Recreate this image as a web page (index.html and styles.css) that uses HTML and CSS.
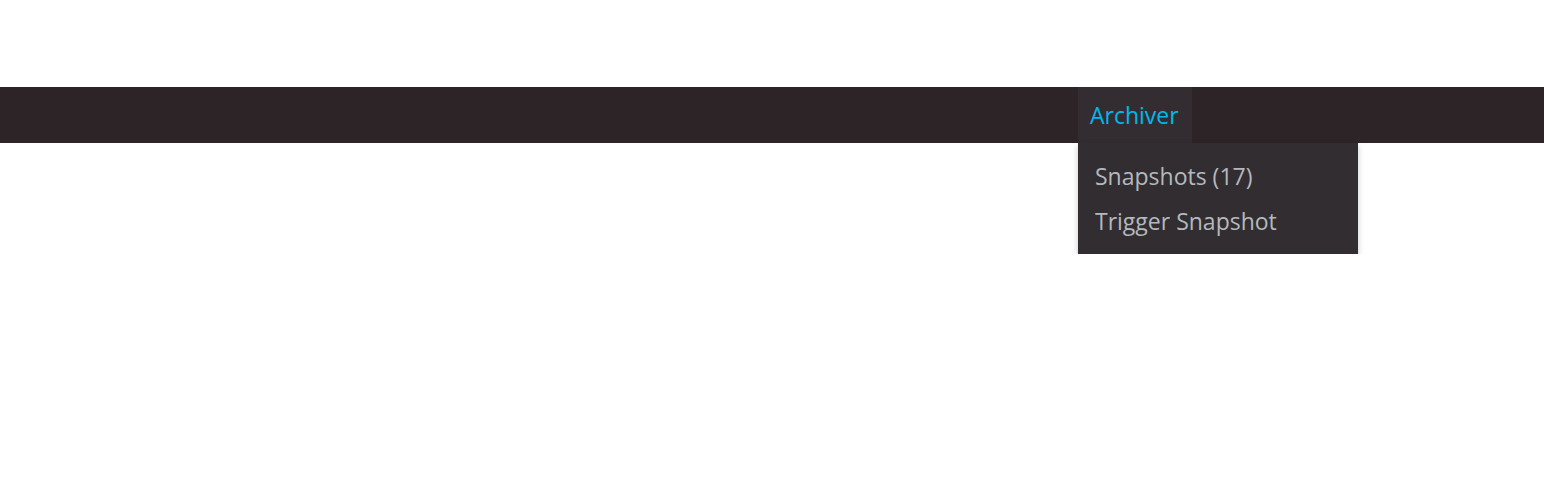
FILE: index.html
```html
<!DOCTYPE html>
<html>
<head>
<meta charset="utf-8">
<link rel="stylesheet" href="styles.css">
</head>
<body>
<div class="page">
  <div class="adminbar">
    <div class="menu-item">
      <a class="menu-link" href="#">Archiver</a>
    </div>
  </div>
  <div class="drop-row">
    <div class="dropdown">
      <a class="drop-link" href="#">Snapshots (17)</a>
      <a class="drop-link" href="#">Trigger Snapshot</a>
    </div>
  </div>
</div>
</body>
</html>
```
FILE: styles.css
```css
html, body {
  margin: 0;
  padding: 0;
  background: #ffffff;
}
.page {
  padding-top: 87px;
  font-family: "Open Sans", "Noto Sans", sans-serif;
}
.adminbar {
  height: 56px;
  background: #2d2428;
  display: flex;
  padding-left: 1078px;
}
.menu-item {
  height: 56px;
  width: 114px;
  background: #332c30;
}
.menu-link {
  display: block;
  height: 56px;
  line-height: 56px;
  padding-left: 12px;
  font-size: 23px;
  font-weight: 500;
  color: #00b9eb;
  text-decoration: none;
  white-space: nowrap;
}
.drop-row {
  display: flex;
  padding-left: 1078px;
}
.dropdown {
  display: flex;
  flex-direction: column;
  width: 280px;
  height: 111px;
  box-sizing: border-box;
  padding-top: 11px;
  background-color: #322d31;
  box-shadow: 0 3px 6px rgba(0, 0, 0, 0.22);
}
.drop-link {
  display: block;
  padding-left: 17px;
  height: 45px;
  line-height: 45px;
  font-size: 23px;
  font-weight: 500;
  color: #b4b9be;
  text-decoration: none;
  white-space: nowrap;
}
```
